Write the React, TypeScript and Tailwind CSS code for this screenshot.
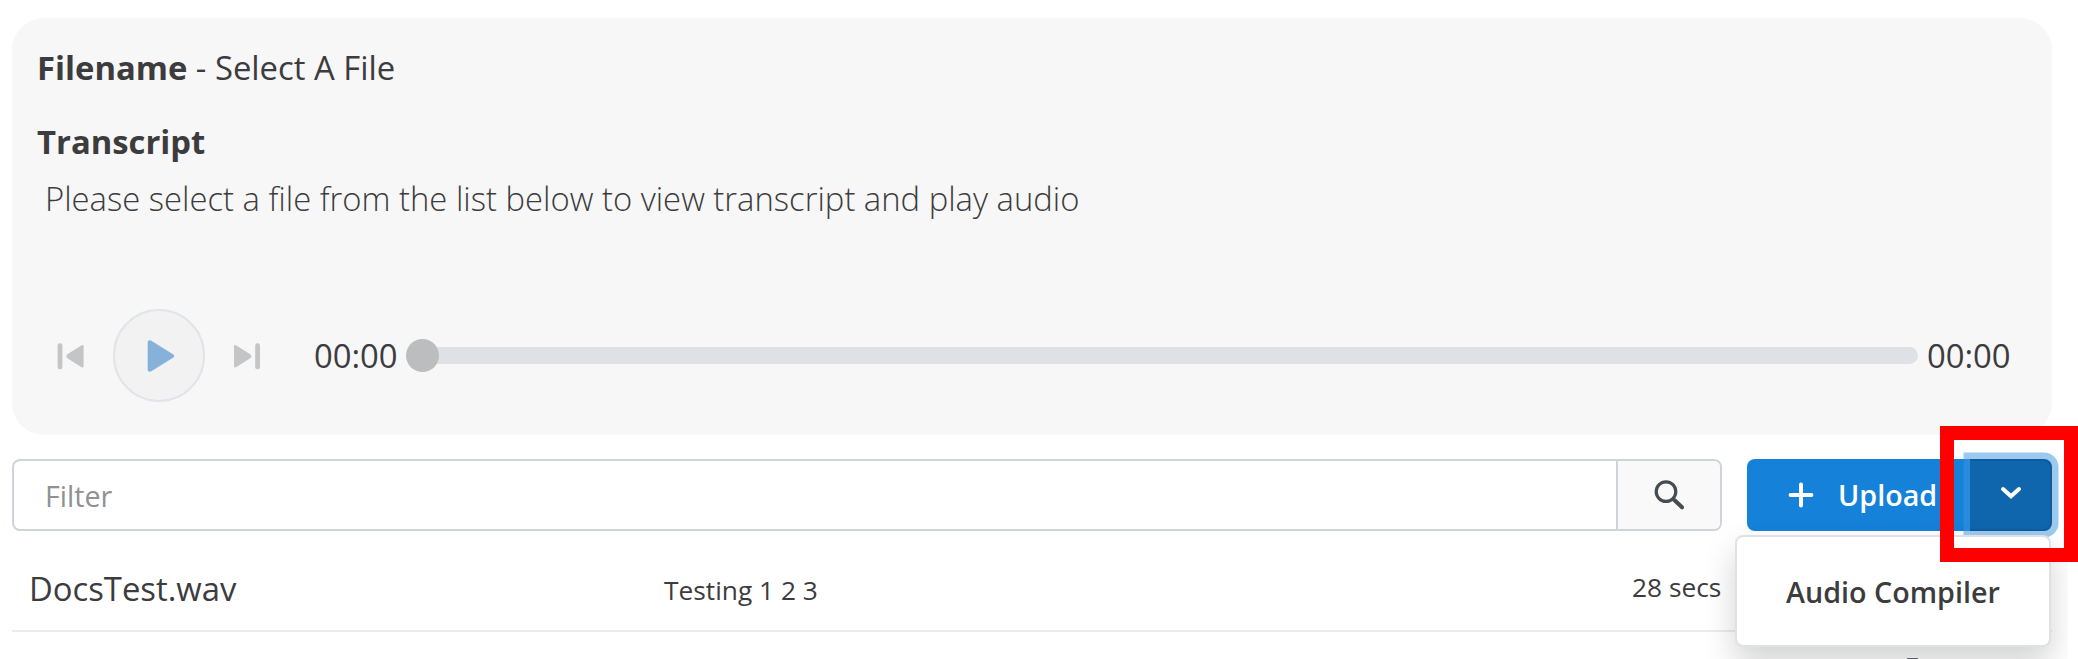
import React from "react";

const PrevIcon = () => (
  <svg width="30" height="30" viewBox="0 0 30 30" fill="#c4c5c6">
    <rect x="1.6" y="2.2" width="4.8" height="26" rx="2.2" />
    <path d="M25.2 4.4c1.5-.9 2.4-.2 2.4 1.1v19.4c0 1.3-.9 2-2.4 1.1L11.4 17.2c-1.5-.9-1.5-2.9 0-3.9z" />
  </svg>
);

const NextIcon = () => (
  <svg width="30" height="30" viewBox="0 0 30 30" fill="#c4c5c6">
    <rect x="23.2" y="2.2" width="4.8" height="26" rx="2.2" />
    <path d="M4.4 4.4c-1.5-.9-2.4-.2-2.4 1.1v19.4c0 1.3.9 2 2.4 1.1L18.2 17.2c1.5-.9 1.5-2.9 0-3.9z" />
  </svg>
);

const PlayIcon = () => (
  <svg width="28" height="32" viewBox="0 0 28 32" fill="#86b1d8">
    <path d="M.7 2.6C.7.5 2.6-.2 4.3.8L26 14.2c1.6 1 1.6 2.6 0 3.6L4.3 31.2C2.6 32.2.7 31.5.7 29.4z" />
  </svg>
);

const SearchIcon = () => (
  <svg width="32" height="32" viewBox="0 0 32 32" fill="none" stroke="#454c54" strokeLinecap="round">
    <circle cx="13" cy="12.6" r="9.8" strokeWidth="3.2" />
    <path d="M21.6 21.2L29 28.3" strokeWidth="4" />
  </svg>
);

const PlusIcon = () => (
  <svg width="26" height="26" viewBox="0 0 26 26" stroke="#fff" strokeWidth="4" strokeLinecap="round">
    <path d="M13 2.6V23.4M2.6 13H23.4" />
  </svg>
);

const ChevronIcon = () => (
  <svg width="22" height="14" viewBox="0 0 22 14" fill="none" stroke="#fff" strokeWidth="4" strokeLinecap="round" strokeLinejoin="miter">
    <path d="M3 3L11 10.3L19 3" />
  </svg>
);

export default function App() {
  return (
    <div className="relative h-[659px] w-[2078px] overflow-hidden bg-white font-['Open_Sans',sans-serif] text-[#3c3c3e]">
      <div className="h-full w-[2068px] overflow-hidden pl-3 pt-[18px]">
        <section className="h-[417px] w-[2040px] rounded-[32px] bg-[#f7f7f7] px-[25px] pt-[26px]">
          <h2 className="h-[48px] whitespace-nowrap text-[32.8px] leading-[48px]">
            <span className="font-bold">Filename</span> - Select A File
          </h2>
          <h3 className="mt-[26px] h-[48px] text-[32.8px] font-bold leading-[48px]">Transcript</h3>
          <p className="mt-[9px] h-[48px] whitespace-nowrap pl-2 text-[32.8px] font-light leading-[48px]">
            Please select a file from the list below to view transcript and play audio
          </p>
          <div className="mt-[86px] flex h-[93px] items-center">
            <button className="ml-[19px]"><PrevIcon /></button>
            <button className="ml-[27px] flex h-[93px] w-[92px] items-center justify-center rounded-full border-2 border-[#e1e4e8] bg-[#f2f2f2] pl-1">
              <PlayIcon />
            </button>
            <button className="ml-[27px]"><NextIcon /></button>
            <span className="ml-[52px] w-[92px] pt-px text-[32.8px] leading-[48px]">00:00</span>
            <div className="flex h-[33px] w-[1512px] items-center">
              <span className="z-10 size-[33px] shrink-0 rounded-full bg-[#bcbdbe]" />
              <span className="-ml-4 h-[17px] flex-1 rounded-r-full bg-[#dee1e6]" />
            </div>
            <span className="ml-[9px] pt-px text-[32.8px] leading-[48px]">00:00</span>
          </div>
        </section>

        <div className="mt-[24px] flex h-[72px] w-[2040px]">
          <div className="flex w-[1710px] overflow-hidden rounded-lg border-2 border-[#ced4da]">
            <div className="w-[1602px] pl-[31px] text-[28.7px] leading-[69px] text-[#8f9193]">Filter</div>
            <div className="flex flex-1 items-center justify-center border-l-2 border-[#ced4da] bg-[#f9f9f9]">
              <SearchIcon />
            </div>
          </div>
          <div className="ml-[25px] flex w-[305px]">
            <button className="flex w-[223px] items-center rounded-l-lg bg-[#1681d9] pl-[41px] text-[28.7px] font-semibold text-white">
              <PlusIcon />
              <span className="ml-[24px]">Upload</span>
            </button>
            <button className="flex flex-1 items-center justify-center rounded-r-lg border-2 border-l-0 border-[#0f5b9f] bg-[#1066ac] pb-1 pl-px shadow-[0_0_0_6.5px_rgba(58,150,222,0.5)]">
              <ChevronIcon />
            </button>
          </div>
        </div>

        <div className="flex h-[101px] w-[2040px] border-b-2 border-[#ececec] pl-[17px]">
          <div className="w-[635px] pt-[34px] text-[32.8px] leading-[48px]">DocsTest.wav</div>
          <div className="w-[968px] pt-[35px] text-[26.3px] leading-[48px]">Testing 1 2 3</div>
          <div className="pt-[32px] text-[26.3px] leading-[48px]">28 secs</div>
        </div>
        <div className="ml-[1895px] mt-[26px] h-[8px] w-[11px] bg-[#5f6d79]" />
      </div>

      <div className="absolute left-0 top-0 h-full w-[2068px] overflow-hidden">
        <div className="absolute left-[1735px] top-[535px] h-[112px] w-[316px] rounded-lg border-2 border-[#dee2e6] bg-white pl-[49px] pt-[31px] text-[28.7px] font-semibold leading-[48px] shadow-[0_16px_32px_rgba(0,0,0,0.175)]">
          Audio Compiler
        </div>
      </div>
      <div className="absolute left-[1940px] top-[426px] h-[136px] w-[138px] border-[14px] border-[#ff0000]" />
    </div>
  );
}
